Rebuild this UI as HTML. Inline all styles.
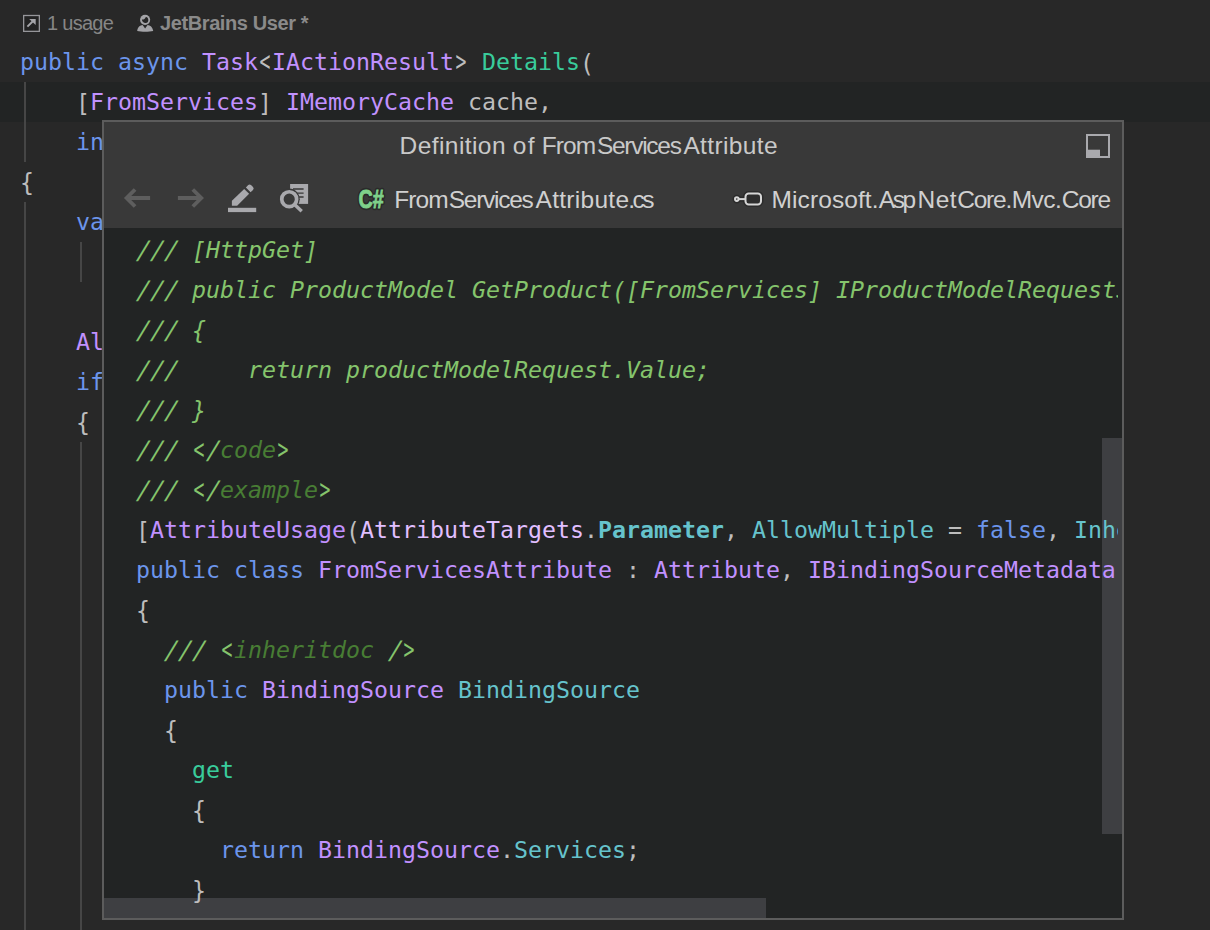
<!DOCTYPE html>
<html lang="en">
<head>
<meta charset="utf-8">
<title>Definition of FromServicesAttribute</title>
<style>
html,body{margin:0;padding:0}
body{width:1210px;height:930px;overflow:hidden;background:#282828;position:relative;font-family:"Liberation Sans",sans-serif}
.abs{position:absolute}
.code{font-family:"DejaVu Sans Mono","Liberation Mono",monospace;font-size:23.25px;line-height:40px;white-space:pre;color:#bdbdbd}
.ln{position:absolute;left:0;height:40px;white-space:pre}
.k{color:#6c95eb}.t{color:#c191ff}.e{color:#e1bfff}.m{color:#39cc9b}.p{color:#66c3cc}.b{font-weight:bold}
.c{color:#85c46c;font-style:italic}.x{color:#487d34;font-style:italic}
.s,.br,.a,.cb{display:inline-block}
.cb{transform-origin:50% 10px;transform:scaleY(1.045)}
.s{transform:translateX(1.15px) skewX(-7.8deg) scaleY(1.096)}
.br{transform-origin:50% 12px;transform:scaleY(1.1)}
.a{transform-origin:50% 21px;transform:scale(0.78,1.2)}
.ui{font-family:"Liberation Sans",sans-serif;white-space:nowrap;position:absolute}
.w{font-size:24.5px;line-height:40px}
#ed{left:0;top:0;width:1210px;height:930px;overflow:hidden}
#cur{left:0;top:82px;width:1210px;height:40px;background:#222424}
.g{position:absolute;width:2px;background:#464646}
#pop{left:102px;top:120px;width:1018px;height:796px;border:2px solid #5c5c5c;background:#222424;overflow:hidden}
#hdr{left:0;top:0;width:1018px;height:106px;background:#393939}
#view{left:0;top:106px;width:1014px;height:690px;overflow:hidden}
#vs{left:998px;top:316px;width:20px;height:396px;background:#3e3f42}
#hs{left:0;top:776px;width:662px;height:20px;background:#3e3f42}
</style>
</head>
<body>
<div id="ed" class="abs">
  <div id="cur" class="abs"></div>
  <div class="g" style="left:24px;top:82px;height:80px"></div>
  <div class="g" style="left:24px;top:202px;height:728px"></div>
  <div class="g" style="left:80px;top:242px;height:40px"></div>
  <div class="g" style="left:80px;top:442px;height:488px"></div>
  <div id="lens" class="abs" style="left:0;top:2px;width:400px;height:40px">
    <svg class="abs" style="left:22px;top:12px" width="20" height="20" viewBox="0 0 20 20"><rect x="1.65" y="1.5" width="15.7" height="15.85" fill="#232323" stroke="#96969a" stroke-width="1.3"/><path d="M5.4 12.7 L10.6 7.5" fill="none" stroke="#a6a6aa" stroke-width="1.9"/><path d="M7.2 5.1 H13.7 V11 Z" fill="#a6a6aa"/></svg>
    <span class="ui" style="left:47px;top:9px;font-size:20px;line-height:24px;color:#868686;letter-spacing:-0.72px">1 usage</span>
    <svg class="abs" style="left:136px;top:12px" width="20" height="20" viewBox="0 0 20 20"><path d="M1.2 16.9 C1.5 13 4.2 11 6.6 10.9 L9.1 14.5 L11.6 10.9 C14 11 16.7 13 17.2 16.9 C13 18 5.4 18 1.2 16.9 Z" fill="#a3a3a7"/><circle cx="9.1" cy="5.8" r="5.1" fill="#a3a3a7"/><path d="M5.9 5.5 C7.4 5.9 9 5.1 9.6 3.2 L10.5 2.9 C12.9 4.2 12.9 7.7 10.7 8.8 C8.5 9.8 6.1 8.2 5.9 5.5 Z" fill="#262626"/></svg>
    <span class="ui" style="left:160px;top:9px;font-size:20px;line-height:24px;color:#8a8a8a;font-weight:bold;letter-spacing:-0.4px">JetBrains User *</span>
  </div>
  <div class="code abs" style="left:20px;top:2px">
<div class="ln" style="top:40px"><span class="k">public async</span> <span class="t">Task</span><span class="a">&lt;</span><span class="t">IActionResult</span><span class="a">&gt;</span> <span class="m">Details</span><span class="br">(</span></div>
<div class="ln" style="top:80px">    <span class="br">[</span><span class="t">FromServices</span><span class="br">]</span> <span class="t">IMemoryCache</span> cache,</div>
<div class="ln" style="top:120px">    <span class="k">int</span> id<span class="br">)</span></div>
<div class="ln" style="top:160px"><span class="cb">{</span></div>
<div class="ln" style="top:200px">    <span class="k">var</span> cacheKey = </div>
<div class="ln" style="top:320px">    <span class="t">Album</span> album;</div>
<div class="ln" style="top:360px">    <span class="k">if</span> <span class="br">(</span>!cache.TryGetValue<span class="br">(</span>cacheKey, <span class="k">out</span> album<span class="br">)</span><span class="br">)</span></div>
<div class="ln" style="top:400px">    <span class="cb">{</span></div>
  </div>
</div>
<div id="pop" class="abs">
  <div id="hdr" class="abs">
    <svg class="abs" style="left:0;top:0" width="1018" height="106" viewBox="104 122 1018 106">
      <g fill="none" stroke="#5e5e5e" stroke-width="3.8"><path d="M150.1 198 H126.2 M135.1 189.5 L126.6 198 L135.1 206.5"/><path d="M177.9 198 H201.8 M192.8 189.5 L201.3 198 L192.8 206.5"/></g>
      <g fill="#a9a9ad"><rect x="228" y="207.8" width="28.2" height="4.3"/><path d="M231.9 200.8 L244.2 188.9 L249.1 193.8 L237.1 205.75 H231.9 Z"/><path d="M245.9 187.4 L248.2 185.1 Q249.6 183.7 251 185.1 L253 187.1 Q254.4 188.5 253 189.9 L250.6 192.3 Z"/></g>
      <g><rect x="290.1" y="184" width="18" height="19.9" fill="#a9a9ad"/><path d="M293 189 H303.6 M293 193.1 H303.6 M293 197 H303.6" stroke="#393939" stroke-width="1.35"/><circle cx="289.2" cy="199.2" r="10.6" fill="#393939"/><circle cx="289.2" cy="199.2" r="7.45" fill="none" stroke="#a9a9ad" stroke-width="3.7"/><path d="M294.3 204.3 L301.7 211.3" stroke="#a9a9ad" stroke-width="3.4"/></g>
      <g font-family="Liberation Sans, sans-serif" font-weight="bold" font-size="25.6"><text x="358.4" y="208.2" textLength="25.2" lengthAdjust="spacingAndGlyphs" fill="#2a2a2a" stroke="#2a2a2a" stroke-width="4.4" stroke-linejoin="round">C#</text><text x="358.4" y="208.2" textLength="25.2" lengthAdjust="spacingAndGlyphs" fill="#7fd08a" stroke="#7fd08a" stroke-width="0.9">C#</text></g>
      <g fill="none" stroke="#2b2b2b" stroke-width="5"><circle cx="736.8" cy="199.1" r="1.8"/><path d="M739 199.1 H745"/><rect x="745.5" y="193.5" width="15.5" height="10.9" rx="3.2"/></g>
      <g fill="#2d2d2d" stroke="#d6d6d6" stroke-width="2"><path d="M738.6 199.1 H745.5"/><circle cx="736.8" cy="199.1" r="1.8"/><rect x="745.5" y="193.5" width="15.5" height="10.9" rx="3.2"/></g>
      <rect x="1087" y="135" width="22" height="22" fill="none" stroke="#a9a9ad" stroke-width="2"/><rect x="1086" y="149.7" width="14" height="8.3" fill="#a9a9ad"/>
    </svg>

    <div id="ttl"><span class="ui w" style="left:295.6px;top:4px;letter-spacing:0.42px;color:#c9c9c9">Definition</span><span class="ui w" style="left:408.7px;top:4px;letter-spacing:1.5px;color:#c9c9c9">of</span><span class="ui w" style="left:437.7px;top:4px;letter-spacing:-0.9px;color:#c9c9c9">From</span><span class="ui w" style="left:492.9px;top:4px;letter-spacing:-1.27px;color:#c9c9c9">Services</span><span class="ui w" style="left:579.4px;top:4px;letter-spacing:0.375px;color:#c9c9c9">Attribute</span></div>
    <div id="fn"><span class="ui w" style="left:290.3px;top:58px;letter-spacing:-0.93px;color:#d0d0d0">From</span><span class="ui w" style="left:344.8px;top:58px;letter-spacing:-1.27px;color:#d0d0d0">Services</span><span class="ui w" style="left:431.5px;top:58px;letter-spacing:0.29px;color:#d0d0d0">Attribute</span><span class="ui w" style="left:524.3px;top:58px;letter-spacing:-2.55px;color:#d0d0d0">.cs</span></div>
    <div id="mod"><span class="ui w" style="left:667.6px;top:58px;letter-spacing:0.08px;color:#d0d0d0">Microsoft.</span><span class="ui w" style="left:774.8px;top:58px;letter-spacing:-2.4px;color:#d0d0d0">Asp</span><span class="ui w" style="left:813.5px;top:58px;letter-spacing:0.5px;color:#d0d0d0">Net</span><span class="ui w" style="left:853.2px;top:58px;letter-spacing:-1.22px;color:#d0d0d0">Core.</span><span class="ui w" style="left:907.8px;top:58px;letter-spacing:-0.6px;color:#d0d0d0">Mvc.</span><span class="ui w" style="left:957.7px;top:58px;letter-spacing:-1.23px;color:#d0d0d0">Core</span></div>
  </div>
  <div id="vs" class="abs"></div>
  <div id="hs" class="abs"></div>
  <div id="view" class="abs">
    <div class="code abs" style="left:32px;top:2px">
<div class="ln" style="top:0"><span class="c"><span class="s">///</span> <span class="br">[</span>HttpGet<span class="br">]</span></span></div>
<div class="ln" style="top:40px"><span class="c"><span class="s">///</span> public ProductModel GetProduct<span class="br">(</span><span class="br">[</span>FromServices<span class="br">]</span> IProductModelRequest</span><span class="c" style="display:inline-block;clip-path:inset(60% 0 0 0)">Service productModelRequest<span class="br">)</span></span></div>
<div class="ln" style="top:80px"><span class="c"><span class="s">///</span> <span class="cb">{</span></span></div>
<div class="ln" style="top:120px"><span class="c"><span class="s">///</span>     return productModelRequest.Value;</span></div>
<div class="ln" style="top:160px"><span class="c"><span class="s">///</span> <span class="cb">}</span></span></div>
<div class="ln" style="top:200px"><span class="c"><span class="s">///</span> <span class="a">&lt;</span><span class="s">/</span></span><span class="x">code</span><span class="c"><span class="a">&gt;</span></span></div>
<div class="ln" style="top:240px"><span class="c"><span class="s">///</span> <span class="a">&lt;</span><span class="s">/</span></span><span class="x">example</span><span class="c"><span class="a">&gt;</span></span></div>
<div class="ln" style="top:280px"><span class="br">[</span><span class="t">AttributeUsage</span><span class="br">(</span><span class="e">AttributeTargets</span>.<span class="p b">Parameter</span>, <span class="p">AllowMultiple</span> = <span class="k">false</span>, <span class="p">Inherited</span> = <span class="k">true</span><span class="br">)</span><span class="br">]</span></div>
<div class="ln" style="top:320px"><span class="k">public class</span> <span class="t">FromServicesAttribute</span> : <span class="t">Attribute</span>, <span class="t">IBindingSourceMetadata</span>, <span class="t">IModelNameProvider</span>, <span class="t">IFromServiceMetadata</span></div>
<div class="ln" style="top:360px"><span class="cb">{</span></div>
<div class="ln" style="top:400px">  <span class="c"><span class="s">///</span> <span class="a">&lt;</span></span><span class="x">inheritdoc</span><span class="c"> <span class="s">/</span><span class="a">&gt;</span></span></div>
<div class="ln" style="top:440px">  <span class="k">public</span> <span class="t">BindingSource</span> <span class="p">BindingSource</span></div>
<div class="ln" style="top:480px">  <span class="cb">{</span></div>
<div class="ln" style="top:520px">    <span class="m">get</span></div>
<div class="ln" style="top:560px">    <span class="cb">{</span></div>
<div class="ln" style="top:600px">      <span class="k">return</span> <span class="t">BindingSource</span>.<span class="p">Services</span>;</div>
<div class="ln" style="top:640px">    <span class="cb">}</span></div>
    </div>
  </div>
</div>
</body>
</html>
